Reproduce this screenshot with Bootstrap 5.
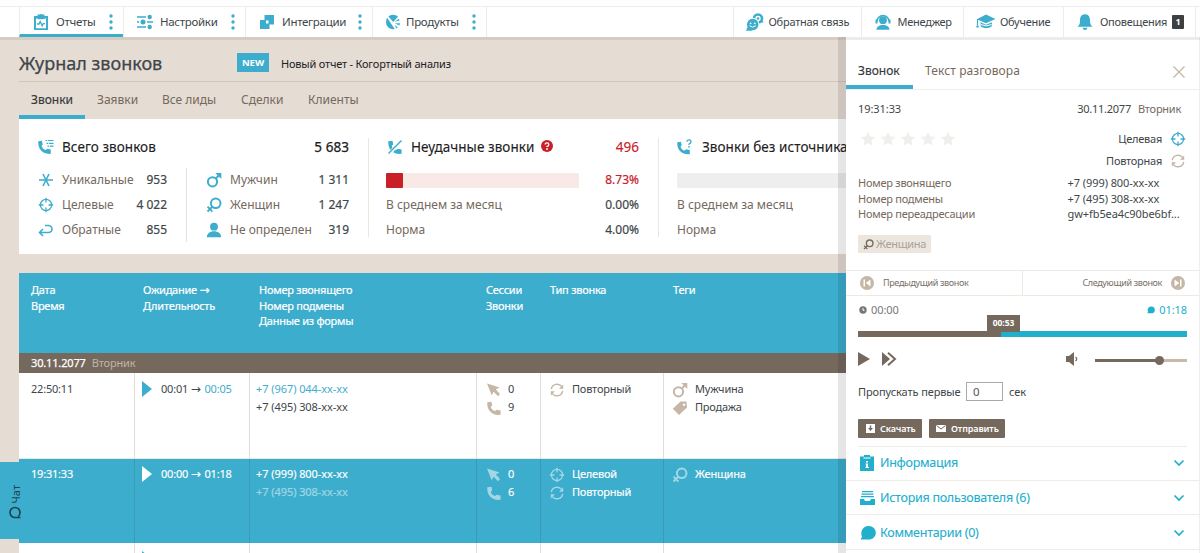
<!DOCTYPE html>
<html lang="ru">
<head>
<meta charset="utf-8">
<meta name="viewport" content="width=device-width, initial-scale=1">
<title>Журнал звонков</title>
<link href="https://cdn.jsdelivr.net/npm/bootstrap@5.3.0/dist/css/bootstrap.min.css" rel="stylesheet">
<style>
:root{--blue:#3dadcd;--cyan:#22afcc;--sand:#e5dcd3;--brown:#75695d;--tan:#c5b6a6;--ink:#3e4649}
body{font-family:"Noto Sans","Open Sans",sans-serif;font-size:12px;line-height:16px;color:var(--ink);background:var(--sand);height:553px;overflow:hidden}
svg{display:block;flex:none;fill:currentColor}
.ic{width:16px;height:16px}
.st{fill:none;stroke:currentColor}
.tb{color:var(--blue)}.tc{color:var(--cyan)}.tt{color:var(--tan)}.tr{color:#c92027}.tbr{color:#75695d}.dk{color:#1c2123}
.med{-webkit-text-stroke:.25px currentColor}
.sm{font-size:11px;letter-spacing:-.25px}
.tel{letter-spacing:-.07px}
.ar{font-family:"DejaVu Sans",sans-serif;font-size:12px;line-height:1;letter-spacing:0;margin:0 1px 0 0}
.topbar{height:37px;padding-top:6px;z-index:5;box-shadow:0 3px 0 rgba(90,70,50,.1)}
.topbar .rule{border-top:1px solid #ececec;padding-left:19px;padding-right:4px;height:31px}
.mi{height:30px;border-left:1px solid #ececec;font-size:11.5px;letter-spacing:-.3px;white-space:nowrap}
.mi.end{border-right:1px solid #ececec}
.mi.on{border-bottom:3px solid var(--blue);padding-top:3px}
.aux .mi{font-size:11px;letter-spacing:-.25px}
.cnt{width:12px;height:14px;flex:none;background:#3c4042;color:#fff;font:bold 9px/14px "Noto Sans";border-radius:1px}
.workspace{height:516px}
.journal{width:846px;padding-left:19px}
.pagehead{height:45px;border-bottom:1px solid #d2c6b8}
.pagehead h1{font-size:18px;line-height:24px;width:218px}
.newtag{width:32px;height:19px;background:var(--blue);color:#fff;font:bold 9.5px/19px "Noto Sans"}
.tabs{height:37px}
.tabs div{height:37px;line-height:36px}
.tabs .on,.ptabs .on{border-bottom:4px solid var(--blue);color:#33393b;-webkit-text-stroke:.15px currentColor}
.stats{height:135px;width:900px}
.stat-h{font-size:13.5px;line-height:18px;letter-spacing:.06px;-webkit-text-stroke:.1px currentColor}
.duo{height:74px}
.lrow{height:24.8px}
.lrow .ms-auto{-webkit-text-stroke:.2px currentColor}
.bar{height:15px;width:193px;background:#f8e8e6;border-radius:1px}
.bar>div{height:15px;background:#c92027;border-radius:1px}
.log{margin-top:19px;width:900px}
.g{display:grid;grid-template-columns:116px 115px 227px 64px 123px 1fr}
.lh{height:80px;background:var(--blue);color:#fff;padding-top:9px;line-height:15.5px;font-size:11px;letter-spacing:-.25px;-webkit-text-stroke:.2px currentColor}
.day{height:20px;background:var(--brown);line-height:20px;font-size:11px;letter-spacing:-.15px}
.call{height:86px;background:#fff;font-size:11px;letter-spacing:-.2px;border-bottom:1px solid #ebe6e0}
.call>div{border-right:1px solid #e2dcd5;padding-top:8px}
.call>div:last-child{border-right:0}
.call .ic{margin-top:1px}
.call.on{background:var(--blue);color:#fff;height:84px;border-bottom:0;-webkit-text-stroke:.15px currentColor}
.call.on>div{border-color:#3b9ab4;padding-top:7px}
.call.on .tt{color:#a3d7e6}
.ln{height:18.3px}
.fade5{opacity:.5}
.panel{width:354px;background:#fff;box-shadow:-8px 0 0 rgba(0,0,0,.1);z-index:3;border-right:1px solid #eee}
.ptabs{height:53px;border-bottom:1px solid #eee;padding-top:16px}
.ptabs div{height:36px;line-height:35px}
.pin{padding-left:12px;padding-right:12px}
.nums{line-height:15.5px;height:47px}
.gtag{width:73px;height:18px;background:#ece6de;color:#aaa29a;border-radius:1px}
.pn{height:26px;border-top:1px solid #efe9e2;border-bottom:1px solid #efe9e2;font-size:9px;letter-spacing:-.35px;color:#777068}
.pn>div{width:176px}
.pn>div:last-child{border-left:1px solid #efe9e2;width:177px}
.track{height:6px;background:var(--cyan)}
.done{height:6px;background:var(--brown)}
.tip{left:129px;top:-16px;width:33px;height:17px;background:var(--brown);color:#fff;font:bold 8.5px/16px "Noto Sans";letter-spacing:-.1px}
.vol{width:92px;height:3px;background:#c9baa8}
.level{height:3px;background:var(--brown);width:64px}
.knob{width:9px;height:9px;border-radius:50%;background:var(--brown);left:60px;top:-3px}
.sec{width:37px;height:19px;border:1px solid #aaa;border-radius:0;font-size:11.5px;padding:0 6px;color:#555}
.bt{height:19px;background:var(--brown);color:#fff;border:0;border-radius:1px;font-weight:600;font-size:9px;letter-spacing:-.1px;padding:0;line-height:19px}
.acc{height:34.7px;border-bottom:1px solid #f0ebe4;font-size:12.5px;letter-spacing:-.27px;padding:1px 14px 0 14px;-webkit-text-stroke:.1px currentColor}
.chat{left:0;top:462px;width:19px;height:77px;background:var(--blue);z-index:4;color:#1f4450}
.chat span{writing-mode:vertical-rl;transform:rotate(180deg);font-size:11px}
</style>
</head>
<body>
<svg width="0" height="0" class="position-absolute">
<symbol id="target" viewBox="0 0 16 16"><g class="st" stroke-width="1.3"><circle cx="8" cy="8" r="5.6"/><path d="M8 .8v4.7M8 10.500v4.700M.8 8h4.700M10.500 8h4.700"/></g></symbol>
<symbol id="repeat" viewBox="0 0 16 16"><path class="st" stroke-width="1.4" d="M2.300 7.200A5.800 5.800 0 0 1 12.800 4.700M13.700 8.800A5.800 5.800 0 0 1 3.200 11.300"/><path d="M14.200 2.500v4.200H10zM1.800 13.500V9.300H6z"/></symbol>
<symbol id="male" viewBox="0 0 16 16"><circle class="st" stroke-width="2" cx="6.500" cy="9.800" r="4.600"/><path class="st" stroke-width="2" d="M9.700 6.600 13 3.300"/><path d="M9.300 1h6v6z"/></symbol>
<symbol id="female" viewBox="0 0 16 16"><circle class="st" stroke-width="2" cx="9.700" cy="6.300" r="4.800"/><path class="st" stroke-width="1.800" d="M6.500 9.500 1.500 14.500M1.500 9.700l4.900 4.900"/></symbol>
<symbol id="phone" viewBox="0 0 16 16"><path d="M1.300 2.200 5.500 1.700 6.200 5.800 4.800 6.600C5.200 9 6.800 10.700 9.400 11.100L10.300 9.800 14.600 10.500V14.800C6 15.800 .6 10 1.300 2.200z"/></symbol>
<symbol id="cursor" viewBox="0 0 16 16"><path d="M1 1.500 13.500 5.500 9.800 7.600 14 12 12 14.200 7.700 9.800 5.700 13.200z"/></symbol>
<symbol id="label" viewBox="0 0 16 16"><path fill-rule="evenodd" d="M8.500 1.500H14.500L15 7.500 7 15 .8 8.800zM12 3.400a1.300 1.300 0 1 0 .01 0z"/></symbol>
<symbol id="person" viewBox="0 0 16 16"><circle cx="8" cy="4.700" r="3.900"/><path d="M.8 15.200C.8 11.500 4 9.200 8 9.200s7.200 2.300 7.200 6z"/></symbol>
<symbol id="star" viewBox="0 0 16 16"><path d="M8 .8 10.100 5.600 15.400 6.100 11.400 9.600 12.600 14.800 8 12.100 3.400 14.800 4.600 9.600 .6 6.100 5.900 5.600z"/></symbol>
<symbol id="dots" viewBox="0 0 4 16"><circle cx="2" cy="2" r="1.700"/><circle cx="2" cy="8" r="1.700"/><circle cx="2" cy="14" r="1.700"/></symbol>
<symbol id="chev" viewBox="0 0 12 8"><path class="st" stroke-width="1.700" d="M1.500 1.500 6 6l4.500-4.500"/></symbol>
<symbol id="bubble" viewBox="0 0 16 16"><path d="M8.500 1C13 1 15.800 4 15.800 7.800S13 14.600 8.500 14.600H.5L2 11.800C-.2 6.500 3 1 8.500 1z"/></symbol>
</svg>

<nav class="topbar bg-white position-relative">
 <div class="rule d-flex justify-content-between">
  <div class="d-flex">
   <div class="mi on d-flex align-items-center" style="width:104px">
    <svg class="ic tb" style="margin-left:13px" viewBox="0 0 16 16"><path fill-rule="evenodd" d="M1 2h3.500V.5h2L8 0l1.500.5h2V2H15v14H1zM3 4.500v9.700h10V4.500z"/><path d="M4.500 2h7v3.200h-7z"/><path class="st" stroke-width="1.300" d="M4 10h2l1.200-2.500 2 4.200 1-2H12"/></svg>
    <span style="margin-left:7px">Отчеты</span><svg class="tb ms-auto" style="margin-right:10px" width="4" height="16"><use href="#dots"/></svg></div>
   <div class="mi d-flex align-items-center" style="width:122px">
    <svg class="ic tb" style="margin-left:13px" viewBox="0 0 16 16"><path class="st" stroke-width="1.400" d="M0 3h9M0 8h2M10 8h6M0 13h9"/><circle cx="12.700" cy="3" r="2.200"/><circle cx="6" cy="8" r="2.500"/><circle cx="12.700" cy="13" r="2.200"/></svg>
    <span style="margin-left:7px">Настройки</span><svg class="tb ms-auto" style="margin-right:10px" width="4" height="16"><use href="#dots"/></svg></div>
   <div class="mi d-flex align-items-center" style="width:127px">
    <svg class="ic tb" style="margin-left:13px" viewBox="0 0 16 16"><path fill-rule="evenodd" d="M5.500 1H15v9.500h-4.500V15H1V6h4.500zM7 6.500v3h2.500v-3z"/></svg>
    <span style="margin-left:7px">Интеграции</span><svg class="tb ms-auto" style="margin-right:10px" width="4" height="16"><use href="#dots"/></svg></div>
   <div class="mi end d-flex align-items-center" style="width:115px">
    <svg class="ic tb" style="margin-left:12px" viewBox="0 0 16 16"><path d="M2.200 3.700 9.700 15C5 16.200 1 12.500 1 8.300 1 6.500 1.400 5 2.200 3.700zM3.400 2.400C6.500 0 10.500 .3 13 2.700L8.200 8zM9.500 7.800l4.300-3 .8 1.800zM9.800 9.300h5.200l-.7 2.300zM9.600 10.800l3.200 2.600-1.500 1.200z"/></svg>
    <span style="margin-left:5px">Продукты</span><svg class="tb ms-auto" style="margin-right:10px" width="4" height="16"><use href="#dots"/></svg></div>
  </div>
  <div class="d-flex aux">
   <div class="mi d-flex align-items-center" style="width:128px">
    <svg class="tb" style="margin-left:12px" width="18" height="18" viewBox="0 0 18 18"><circle cx="12" cy="5.500" r="4" class="st" stroke-width="2.600"/><circle cx="12" cy="5.500" r="1.300"/><path d="M13 9.500h4.800L16 7z"/><circle cx="6.700" cy="11.500" r="6.200" stroke="#fff" stroke-width="1"/><path d="M0 17.800h6.500L1.500 14z"/><circle cx="4.600" cy="10.300" r=".9" fill="#fff"/><circle cx="8.800" cy="10.300" r=".9" fill="#fff"/><path d="M3.600 12.700q3.100 3 6.200 0" fill="none" stroke="#fff"/></svg>
    <span style="margin-left:5px">Обратная связь</span></div>
   <div class="mi d-flex align-items-center" style="width:102.500px">
    <svg class="ic tb" style="margin-left:13px" viewBox="0 0 16 16"><path class="st" stroke-width="1.600" d="M2 7.500a6 6 0 0 1 12 0"/><circle cx="8" cy="6.200" r="3.900"/><path d="M.5 5.500h2v4h-2zM13.500 5.500h2v4h-2zM1.500 15.800C1.500 12.500 4.500 11 8 11s6.500 1.500 6.500 4.800z"/></svg>
    <span style="margin-left:7px">Менеджер</span></div>
   <div class="mi d-flex align-items-center" style="width:100px">
    <svg class="tb" style="margin-left:12px" width="20" height="16" viewBox="0 0 20 16"><path d="M10 .5 19.500 5 10 9.300 .8 5.200z"/><path d="M4.500 8.200 10 10.700l6-2.500-.3 4.300Q10 16 4.800 12.500z"/><path class="st" d="M1.500 5v6" stroke-width="1.200"/><circle cx="1.500" cy="12.500" r="1.200"/><path d="M5 10.600q5 2.600 10.500 0" fill="none" stroke="#fff"/></svg>
    <span style="margin-left:4px">Обучение</span></div>
   <div class="mi end d-flex align-items-center" style="width:133px">
    <svg class="ic tb" style="margin-left:13px" viewBox="0 0 16 16"><path d="M8 .3C12 .3 13 3.500 13 6.500S13.500 11 15.500 12.700H.5C2.500 11 3 9.500 3 6.500S4 .3 8 .3zM5.500 13.700h5Q10 16 8 16T5.500 13.700z"/></svg>
    <span style="margin-left:7px">Оповещения</span><span class="cnt text-center ms-auto" style="margin-right:11px">1</span></div>
  </div>
 </div>
</nav>

<div class="workspace d-flex">
 <main class="journal overflow-hidden flex-shrink-0">
  <div class="pagehead d-flex align-items-center" style="padding-top:7px">
   <h1 class="m-0 fw-normal med">Журнал звонков</h1><span class="newtag text-center">NEW</span><span class="dk" style="margin-left:12px;margin-top:3px;font-size:11px;letter-spacing:-.2px">Новый отчет - Когортный анализ</span>
  </div>
  <div class="tabs d-flex tbr">
   <div class="on" style="padding:0 12px;width:66px">Звонки</div><div style="margin-left:12px;width:65px">Заявки</div><div style="width:79px">Все лиды</div><div style="width:67px">Сделки</div><div>Клиенты</div>
  </div>
  <section class="stats bg-white d-flex">
   <div style="width:349px;padding:19px 19px 0 19px;" class="flex-shrink-0">
    <div class="d-flex align-items-center dk stat-h"><svg class="ic tb" viewBox="0 0 16 16"><path d="M.3 2.200 4 1.700 4.700 5.800 3.500 6.600C4 9 5.500 10.700 8 11.100L8.900 9.800 12.800 10.500V14.800C4.800 15.800-.4 10 .3 2.200z"/><path class="st" stroke-width="1.200" stroke-dasharray="1.500 .8 6" d="M7.500 1.500h8M8.500 4.300h7M9.500 7.200h6"/></svg><span style="margin-left:8px">Всего звонков</span><span class="ms-auto med">5 683</span></div>
    <div class="d-flex duo" style="margin-top:12px">
     <div style="width:149px;padding-right:19px;border-right:1px solid #e8e1d8">
      <div class="lrow d-flex align-items-center"><svg class="ic tb" viewBox="0 0 16 16"><path class="st" stroke-width="1.600" d="M1 8h14M5 2l6 12M11 2 5 14"/></svg><span class="tbr" style="margin-left:8px">Уникальные</span><span class="ms-auto">953</span></div>
      <div class="lrow d-flex align-items-center"><svg class="ic tb"><use href="#target"/></svg><span class="tbr" style="margin-left:8px">Целевые</span><span class="ms-auto">4 022</span></div>
      <div class="lrow d-flex align-items-center"><svg class="ic tb" viewBox="0 0 16 16"><path class="st" stroke-width="1.600" d="M5 7 1.500 10.500 5 14M2 10.500h8.500a3.500 3.500 0 0 0 0-7H7"/></svg><span class="tbr" style="margin-left:8px">Обратные</span><span class="ms-auto">855</span></div>
     </div>
     <div class="flex-grow-1" style="padding-left:19px">
      <div class="lrow d-flex align-items-center"><svg class="ic tb"><use href="#male"/></svg><span class="tbr" style="margin-left:8px">Мужчин</span><span class="ms-auto">1 311</span></div>
      <div class="lrow d-flex align-items-center"><svg class="ic tb"><use href="#female"/></svg><span class="tbr" style="margin-left:8px">Женщин</span><span class="ms-auto">1 247</span></div>
      <div class="lrow d-flex align-items-center"><svg class="ic tb"><use href="#person"/></svg><span class="tbr" style="margin-left:8px">Не определен</span><span class="ms-auto">319</span></div>
     </div>
    </div>
   </div>
   <div style="width:291px;margin-top:19px;height:99px;border-left:1px solid #ece6df;border-right:1px solid #ece6df;padding:0 19px 0 17px" class="flex-shrink-0">
    <div class="d-flex align-items-center dk stat-h"><svg class="ic tb" style="margin-left:1px" viewBox="0 0 16 16"><use href="#phone"/><path d="M2 15.500 14 1" stroke="#fff" stroke-width="3.500"/><path class="st" stroke-width="1.500" d="M1.500 14.500 14.500 1.500"/></svg><span style="margin-left:8px">Неудачные звонки</span><svg class="tr" style="margin:-3px 0 0 7px" width="12" height="12" viewBox="0 0 12 12"><circle cx="6" cy="6" r="6"/><path d="M4.200 4.500Q4.200 2.900 6 2.900T7.800 4.500 6 6.500v.6" fill="none" stroke="#fff" stroke-width="1.300"/><circle cx="6" cy="9" r=".9" fill="#fff"/></svg><span class="ms-auto tr">496</span></div>
    <div style="margin-top:12px">
     <div class="lrow d-flex align-items-center"><div class="bar"><div style="width:9%"></div></div><span class="ms-auto tr">8.73%</span></div>
     <div class="lrow d-flex align-items-center"><span class="tbr">В среднем за месяц</span><span class="ms-auto">0.00%</span></div>
     <div class="lrow d-flex align-items-center"><span class="tbr">Норма</span><span class="ms-auto">4.00%</span></div>
    </div>
   </div>
   <div style="padding:19px 0 0 18px" class="flex-shrink-0 flex-grow-1">
    <div class="d-flex align-items-center dk stat-h"><svg class="ic tb" viewBox="0 0 16 16"><path d="M.3 3.200 4 2.700 4.700 6.600 3.500 7.400C4 9.600 5.500 11.200 8 11.600L8.900 10.300 12.800 11V15.200C4.800 16-.4 10.500 .3 3.200z"/><path class="st" stroke-width="1.300" d="M9.800 2.800Q10 .8 12 .8t2 1.800T12 5v1"/><circle cx="12" cy="7.800" r=".9"/></svg><span style="margin-left:9px">Звонки без источника</span></div>
    <div style="margin-top:12px">
     <div class="lrow d-flex align-items-center"><div class="bar" style="background:#eee"></div></div>
     <div class="lrow d-flex align-items-center tbr">В среднем за месяц</div>
     <div class="lrow d-flex align-items-center tbr">Норма</div>
    </div>
   </div>
  </section>

  <section class="log">
   <div class="lh g">
    <div style="padding-left:12px">Дата<br>Время</div><div style="padding-left:8px">Ожидание <span class="ar">→</span><br>Длительность</div><div style="padding-left:9px">Номер звонящего<br>Номер подмены<br>Данные из формы</div><div style="padding-left:9px">Сессии<br>Звонки</div><div style="padding-left:9px">Тип звонка</div><div style="padding-left:9px">Теги</div>
   </div>
   <div class="day text-white" style="padding-left:12px"><span class="med">30.11.2077</span><span style="color:#c0b4a6;margin-left:6px">Вторник</span></div>
   <div class="call g">
    <div style="padding-left:12px">22:50:11</div>
    <div style="padding-left:7px"><div class="d-flex align-items-center"><svg class="tb" width="10" height="16"><path d="M0 0 10 8 0 16z"/></svg><span style="margin-left:9px">00:01 <span class="ar">→</span> <span class="tb">00:05</span></span></div></div>
    <div class="tel" style="padding-left:6px"><div class="ln tb">+7 (967) 044-xx-xx</div><div class="ln">+7 (495) 308-xx-xx</div></div>
    <div style="padding-left:9px"><div class="ln d-flex"><svg class="ic tt"><use href="#cursor"/></svg><span style="margin-left:6px">0</span></div><div class="ln d-flex"><svg class="ic tt"><use href="#phone"/></svg><span style="margin-left:6px">9</span></div></div>
    <div style="padding-left:8px"><div class="ln d-flex"><svg class="tt ic"><use href="#repeat"/></svg><span style="margin-left:7px">Повторный</span></div></div>
    <div style="padding-left:8px"><div class="ln d-flex"><svg class="tt ic"><use href="#male"/></svg><span style="margin-left:7px">Мужчина</span></div><div class="ln d-flex"><svg class="tt ic"><use href="#label"/></svg><span style="margin-left:7px">Продажа</span></div></div>
   </div>
   <div class="call on g">
    <div style="padding-left:12px">19:31:33</div>
    <div style="padding-left:7px"><div class="d-flex align-items-center"><svg width="10" height="16"><path d="M0 0 10 8 0 16z"/></svg><span style="margin-left:9px">00:00 <span class="ar">→</span> 01:18</span></div></div>
    <div class="tel" style="padding-left:6px"><div class="ln">+7 (999) 800-xx-xx</div><div class="ln fade5">+7 (495) 308-xx-xx</div></div>
    <div style="padding-left:9px"><div class="ln d-flex"><svg class="ic tt"><use href="#cursor"/></svg><span style="margin-left:6px">0</span></div><div class="ln d-flex"><svg class="ic tt"><use href="#phone"/></svg><span style="margin-left:6px">6</span></div></div>
    <div style="padding-left:8px"><div class="ln d-flex"><svg class="tt ic"><use href="#target"/></svg><span style="margin-left:7px">Целевой</span></div><div class="ln d-flex"><svg class="tt ic"><use href="#repeat"/></svg><span style="margin-left:7px">Повторный</span></div></div>
    <div style="padding-left:8px"><div class="ln d-flex"><svg class="tt ic"><use href="#female"/></svg><span style="margin-left:7px">Женщина</span></div></div>
   </div>
   <div class="call g"><div></div><div style="padding-left:7px"><svg class="tb" width="10" height="16"><path d="M0 0 10 8 0 16z"/></svg></div><div></div><div></div><div></div><div></div></div>
  </section>
 </main>

 <aside class="panel position-relative flex-shrink-0">
  <div class="ptabs d-flex">
   <div class="on" style="width:67px;padding-left:12px">Звонок</div><div class="tbr" style="margin-left:12px;letter-spacing:.1px">Текст разговора</div>
   <svg class="ms-auto tt" style="margin:13px 14px 0 0" width="12" height="12"><path class="st" stroke-width="1.300" d="m.5.500 11 11m0-11-11 11"/></svg>
  </div>
  <div class="pin" style="height:180px;padding-top:11px">
   <div class="d-flex sm" style="padding-right:6px"><span class="tel">19:31:33</span><span class="ms-auto">30.11.2077</span><span class="tbr" style="margin-left:7px">Вторник</span></div>
   <div class="d-flex" style="margin-top:11px;height:52px">
    <div class="d-flex" style="gap:4px;color:#f1efec;padding:3px 0 0 2px"><svg class="ic"><use href="#star"/></svg><svg class="ic"><use href="#star"/></svg><svg class="ic"><use href="#star"/></svg><svg class="ic"><use href="#star"/></svg><svg class="ic"><use href="#star"/></svg></div>
    <div class="ms-auto sm" style="padding-right:1px;padding-top:3px">
     <div class="d-flex justify-content-end" style="height:21.500px"><span>Целевая</span><svg class="ic tb" style="margin-left:8px"><use href="#target"/></svg></div>
     <div class="d-flex justify-content-end"><span>Повторная</span><svg class="ic tt" style="margin-left:8px"><use href="#repeat"/></svg></div>
    </div>
   </div>
   <div class="d-flex nums sm" style="margin-top:-5px"><div class="tbr" style="width:209.500px">Номер звонящего<br>Номер подмены<br>Номер переадресации</div><div class="text-nowrap tel">+7 (999) 800-xx-xx<br>+7 (495) 308-xx-xx<br>gw+fb5ea4c90be6bf...</div></div>
   <div class="gtag d-flex align-items-center" style="margin-top:13px;padding-left:5px"><svg width="11" height="11" style="color:#756c60"><use href="#female"/></svg><span style="margin-left:2px;font-size:11px;letter-spacing:-.3px">Женщина</span></div>
  </div>
  <div class="pn d-flex"><div class="d-flex align-items-center" style="padding-left:14px"><svg class="tt" width="14" height="14" viewBox="0 0 14 14"><circle cx="7" cy="7" r="7"/><path d="M3.500 3.500h1.500v7H3.500zM10.500 3.500v7L5.800 7z" fill="#fff"/></svg><span style="margin-left:9px">Предыдущий звонок</span></div><div class="d-flex align-items-center justify-content-end" style="padding-right:14px"><span style="margin-right:9px">Следующий звонок</span><svg class="tt" width="14" height="14" viewBox="0 0 14 14"><circle cx="7" cy="7" r="7"/><path d="M9 3.500h1.500v7H9zM3.500 3.500v7L8.200 7z" fill="#fff"/></svg></div></div>
  <div class="pin" style="height:150px">
   <div class="d-flex align-items-center sm tel" style="height:28px;color:#777"><svg width="8" height="8" style="margin-left:1px" viewBox="0 0 8 8"><circle cx="4" cy="4" r="3.700"/><path d="M4 2v2.300h1.500" fill="none" stroke="#fff"/></svg><span style="margin-left:4px">00:00</span><svg class="ms-auto tc" width="8" height="8"><use href="#bubble"/></svg><span class="tc" style="margin-left:4px">01:18</span></div>
   <div class="track position-relative" style="margin-top:7px"><div class="done" style="width:143px"></div><div class="tip position-absolute text-center">00:53</div></div>
   <div class="d-flex align-items-center tbr" style="height:44px"><svg width="12" height="14"><path d="M0 0 12 7 0 14z"/></svg><svg style="margin-left:12px" width="15" height="14"><path d="M0 0 8 7 0 14z"/><path class="st" stroke-width="2" d="m6 .8 7 6.200-7 6.200"/></svg><svg class="ms-auto" width="13" height="14" viewBox="0 0 13 14"><path d="M0 4h3l5-4v14l-5-4H0z"/><path class="st" stroke-width="1.300" d="M9.500 5q2.500 2 0 4"/></svg><div class="vol position-relative" style="margin-left:16px;margin-top:2px"><div class="level"></div><div class="knob position-absolute"></div></div></div>
   <div class="d-flex align-items-center" style="margin-top:1px;height:19px;font-size:11px;letter-spacing:-.1px"><span style="width:102px;white-space:nowrap">Пропускать первые</span><input class="sec" style="margin-left:6px" value="0"><span style="margin-left:6px">сек</span></div>
   <div class="d-flex" style="margin-top:18px;gap:7px;padding-bottom:8px;border-bottom:1px solid #f0ebe4"><button class="bt d-flex align-items-center" style="width:64px"><svg width="9" height="9" style="margin-left:8px" viewBox="0 0 9 9"><path d="M0 0h9v9H0z"/><path d="M3.800 1.500h1.400V4H7L4.500 7 2 4h1.800z" fill="#75695d"/></svg><span style="margin-left:5px">Скачать</span></button><button class="bt d-flex align-items-center" style="width:76px"><svg width="10" height="7" style="margin-left:7px" viewBox="0 0 10 7"><path d="M0 0h10v7H0z"/><path d="m.5.500 4.500 3.500L9.500.500" fill="none" stroke="#75695d"/></svg><span style="margin-left:5px">Отправить</span></button></div>
  </div>
  <div class="acc tc d-flex align-items-center"><svg width="14" height="16" viewBox="0 0 14 16"><path d="M0 1.500h4V0h2l1-1 1 1h2v1.500h4V16H0z"/><path d="M3.500 2.500v1h7v-1M6 6h2v1.500H6zM5.500 8.500H8v3.500h1v1H5.500v-1H6V9.500h-.5z" fill="#fff"/></svg><span style="margin-left:6px">Информация</span><svg class="ms-auto" width="12" height="8"><use href="#chev"/></svg></div>
  <div class="acc tc d-flex align-items-center"><svg width="15" height="14" viewBox="0 0 15 14"><path d="M2 0h11v1.200H2zM1.500 2.500h12v1.200h-12zM1 5h13v1.200H1zM0 8h4l1 2h5l1-2h4v6H0z"/></svg><span style="margin-left:5px">История пользователя (6)</span><svg class="ms-auto" width="12" height="8"><use href="#chev"/></svg></div>
  <div class="acc tc d-flex align-items-center"><svg class="ic"><use href="#bubble"/></svg><span style="margin-left:4px">Комментарии (0)</span><svg class="ms-auto" width="12" height="8"><use href="#chev"/></svg></div>
 </aside>
</div>
<div class="chat position-absolute d-flex flex-column align-items-center" style="padding:23px 0 0 12px"><span>Чат</span><svg width="13" height="13" style="margin-top:2px" viewBox="0 0 13 13"><path class="st" stroke-width="1.700" d="M11.500 11.500H6A5 5 0 1 1 11 6.500Q11 9.500 9 10.500"/></svg></div>
<script src="https://cdn.jsdelivr.net/npm/bootstrap@5.3.0/dist/js/bootstrap.bundle.min.js"></script>
</body>
</html>
